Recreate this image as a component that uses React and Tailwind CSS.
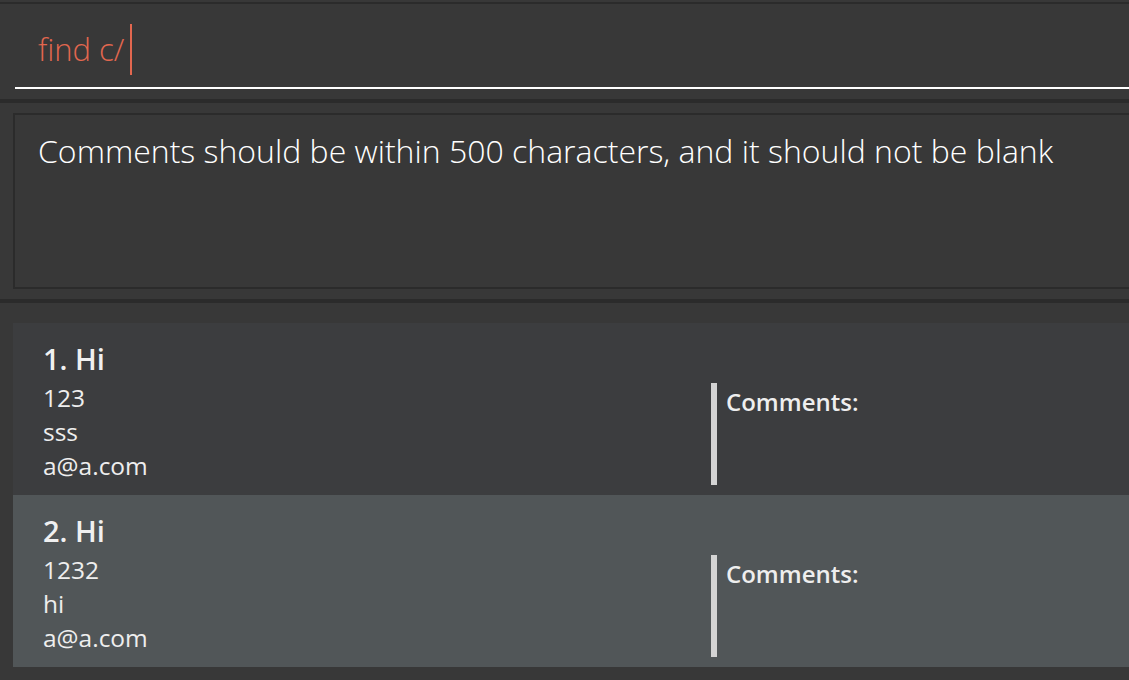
import React from "react";

const persons = [
  { id: 1, name: "Hi", phone: "123", address: "sss", email: "a@a.com", bg: "bg-[#3c3d3f]" },
  { id: 2, name: "Hi", phone: "1232", address: "hi", email: "a@a.com", bg: "bg-[#515658]" },
];

const PersonCard = ({ person }) => (
  <div className={`${person.bg} flex h-[172px] pl-[30px] pt-[16px]`}>
    <div className="w-[668px] shrink-0">
      <div className="text-[29px] font-semibold leading-[40px] text-[#f0f0f0]">
        {person.id}. {person.name}
      </div>
      <div className="mt-[2px] text-[24.5px] leading-[34px] text-[#eeeeee]">
        <div>{person.phone}</div>
        <div>{person.address}</div>
        <div>{person.email}</div>
      </div>
    </div>
    <div className="mt-[44px] flex h-[102px]">
      <div className="w-[6px] bg-[#d4d4d4]" />
      <div className="pl-[9px] pt-[4px] text-[24px] font-semibold leading-[30px] text-[#eeeeee]">
        Comments:
      </div>
    </div>
  </div>
);

export default function App() {
  return (
    <div
      className="h-[680px] w-full overflow-hidden bg-[#383838]"
      style={{ fontFamily: '"Open Sans", "Noto Sans", sans-serif' }}
    >
      <div className="h-[2px]" />
      <div className="h-[2px] bg-[#2b2b2b]" />

      {/* command box */}
      <div className="ml-[15px] h-[85px] border-b-2 border-white">
        <div className="flex items-center pl-[23px] pt-[19px]">
          <span className="text-[31px] font-light leading-[52px] text-[#e2674f]">find c/</span>
          <span className="ml-[6px] h-[51px] w-[2px] bg-[#e2674f]" />
        </div>
      </div>

      <div className="h-[10px]" />
      <div className="h-[4px] bg-[#2b2b2b]" />
      <div className="h-[10px]" />

      {/* result display */}
      <div className="ml-[13px] h-[176px] border-2 border-r-0 border-[#2b2b2b] bg-[#383838] pl-[23px] pt-[14px]">
        <p className="whitespace-nowrap text-[32px] font-light leading-[44px] text-white">
          Comments should be within 500 characters, and it should not be blank
        </p>
      </div>

      <div className="h-[10px]" />
      <div className="h-[4px] bg-[#2b2b2b]" />
      <div className="h-[20px]" />

      {/* person list */}
      <div className="ml-[13px]">
        {persons.map((p) => (
          <PersonCard key={p.id} person={p} />
        ))}
      </div>
    </div>
  );
}
